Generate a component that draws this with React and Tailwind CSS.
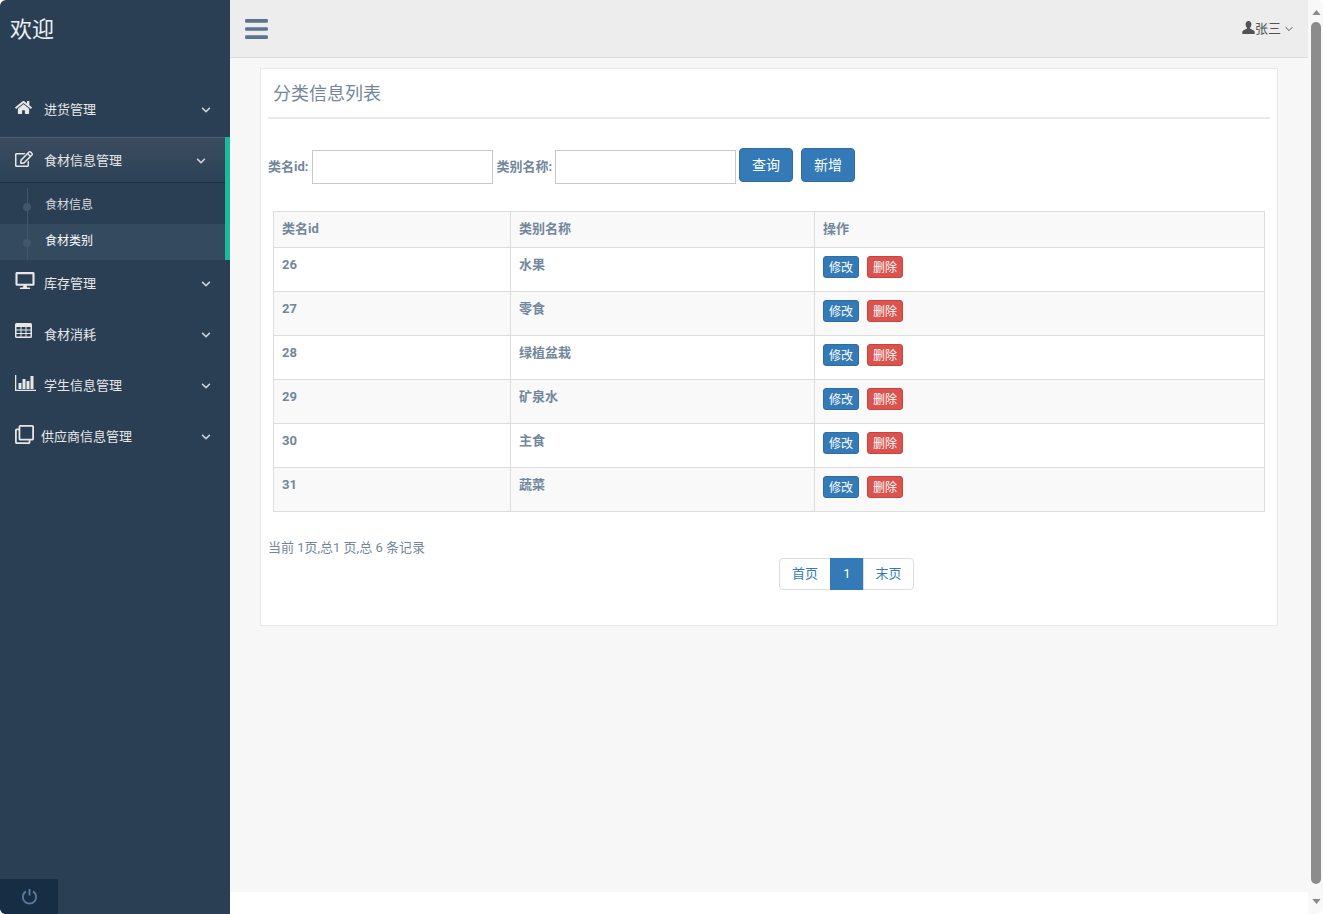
import React from "react";
import { FaHome, FaRegEdit, FaDesktop, FaRegClone, FaBars, FaChevronDown } from "react-icons/fa";

const BarChart = ({ className }) => (
  <svg viewBox="0 0 21 16" className={className} fill="currentColor">
    <path d="M0 0h1.3v14.7H21V16H0z" />
    <rect x="3.5" y="8" width="3" height="6" />
    <rect x="7.5" y="4" width="3" height="10" />
    <rect x="11.5" y="6" width="3" height="8" />
    <rect x="15.5" y="1" width="3" height="13" />
  </svg>
);

const TableIcon = ({ className }) => (
  <svg viewBox="0 0 17 15" className={className} fill="currentColor" fillRule="evenodd">
    <path d="M1.500 0h14A1.500 1.500 0 0 1 17 1.500v12a1.500 1.500 0 0 1-1.500 1.500h-14A1.500 1.500 0 0 1 0 13.500v-12A1.500 1.500 0 0 1 1.500 0zM1.500 4v2.500h4V4zM6.500 4v2.500h4V4zM11.500 4v2.500h4V4zM1.500 7.500V10h4V7.500zM6.500 7.500V10h4V7.500zM11.500 7.500V10h4V7.500zM1.500 11v2.500h4V11zM6.500 11v2.500h4V11zM11.500 11v2.500h4V11z" />
  </svg>
);

const UserIcon = ({ className }) => (
  <svg viewBox="0 0 13 13" className={className} fill="currentColor">
    <path d="M6.500 0C4.700 0 3.600 1.300 3.600 3.200c0 1.400.5 2.600 1.300 3.400v1.100C3 8.500.8 9.300.3 10.800V13h12.400v-2.200C12.200 9.300 10 8.500 8.100 7.700V6.600c.8-.8 1.300-2 1.300-3.400C9.400 1.300 8.300 0 6.500 0z" />
  </svg>
);

const ThinChevron = ({ className }) => (
  <svg viewBox="0 0 9 6" className={className} fill="none" stroke="currentColor" strokeWidth="1.1">
    <path d="M.7 1l3.800 3.800L8.300 1" />
  </svg>
);

const Power = () => (
  <svg viewBox="0 0 18 18" className="w-[17px] h-[17px]" fill="none" stroke="#5a7a9a" strokeWidth="2">
    <path d="M5.200 3.600a7 7 0 1 0 7.600 0" />
    <path d="M9 1v7" />
  </svg>
);

function MenuItem({ icon, iconTop, label, textX }) {
  return (
    <div className="relative flex items-center h-[46px] mb-[5px] pt-[2px] text-[#e7e7e7] text-[13px]">
      <span className={`absolute left-[15px] ${iconTop} text-[#e7e7e7]`}>{icon}</span>
      <span className={textX}>{label}</span>
      <FaChevronDown className="ml-auto mr-[19px] w-[10px] h-[10px] text-[#c8ced4]" />
    </div>
  );
}

function Sidebar() {
  return (
    <aside className="w-[230px] shrink-0 bg-[#2a3f54] flex flex-col h-full rounded-tl-[6px] rounded-bl-[6px] overflow-hidden">
      <div className="h-[86px] pl-[10px] pt-[13px] text-[22px] leading-[34px] text-[#ecf0f1]">欢迎</div>
      <MenuItem icon={<FaHome className="w-[17px] h-[15px]" />} iconTop="top-[14px]" label="进货管理" textX="ml-[44px]" />
      <div className="border-r-[5px] border-[#1abb9c]">
        <div className="relative flex items-center h-[46px] pt-[2px] text-[#e7e7e7] text-[13px] bg-gradient-to-b from-[#3a4c5f] to-[#2d4257] border-t border-[#4e5f70] border-b border-b-[#1f3043]">
          <span className="absolute left-[15px] top-[13px]"><FaRegEdit className="w-[18px] h-[16px]" /></span>
          <span className="ml-[44px]">食材信息管理</span>
          <FaChevronDown className="ml-auto mr-[19px] w-[10px] h-[10px] text-[#c8ced4]" />
        </div>
        <div className="relative pt-[3px] pb-[1px] text-[12px]">
          <div className="absolute left-[27px] top-[5px] bottom-0 w-px bg-[#425668]" />
          <div className="relative h-[36px] flex items-center pl-[45px] pt-[2px] text-[#d5dade] mb-[2px]">
            <span className="absolute left-[23px] top-[17px] w-[8px] h-[8px] rounded-full bg-[#425668]" />
            <span>食材信息</span>
          </div>
          <div className="relative h-[36px] flex items-center pl-[45px] pb-[2px] text-white bg-[#344a5f] -mb-px">
            <span className="absolute left-[27px] top-0 bottom-0 w-px bg-[#425668]" />
            <span className="absolute left-[23px] top-[15px] w-[8px] h-[8px] rounded-full bg-[#425668]" />
            <span>食材类别</span>
          </div>
        </div>
      </div>
      <MenuItem icon={<FaDesktop className="w-[20px] h-[17px]" />} iconTop="top-[12px]" label="库存管理" textX="ml-[44px]" />
      <MenuItem icon={<TableIcon className="w-[17px] h-[15px]" />} iconTop="top-[12px]" label="食材消耗" textX="ml-[44px]" />
      <MenuItem icon={<BarChart className="w-[21px] h-[16px]" />} iconTop="top-[13px]" label="学生信息管理" textX="ml-[44px]" />
      <MenuItem icon={<FaRegClone className="w-[19px] h-[19px]" />} iconTop="top-[12px]" label="供应商信息管理" textX="ml-[41px]" />
      <div className="mt-auto w-[58px] h-[35px] bg-[#172d44] flex items-center justify-center">
        <Power />
      </div>
    </aside>
  );
}

function TopNav() {
  return (
    <header className="h-[58px] shrink-0 bg-[#ededed] border-b border-[#d9dee4] flex items-center pl-[15px] pr-[15px]">
      <FaBars className="w-[23px] h-[26px] text-[#5a738e]" />
      <div className="ml-auto flex items-center text-[13px] text-[#515356]">
        <UserIcon className="w-[13px] h-[13px] -mt-[2px] text-[#515356]" />
        <span className="pt-[1px]">张三</span>
        <ThinChevron className="ml-[4px] w-[8px] h-[6px] text-[#515356]" />
      </div>
    </header>
  );
}

const rows = [
  ["26", "水果"],
  ["27", "零食"],
  ["28", "绿植盆栽"],
  ["29", "矿泉水"],
  ["30", "主食"],
  ["31", "蔬菜"],
];

function Table() {
  return (
    <table className="ml-[5px] w-[992px] table-fixed border-collapse text-[13px] font-bold text-[#73879c]">
      <thead>
        <tr className="bg-[#f9f9f9] h-[36px]">
          <th className="w-[237px] border border-[#dddddd] px-[8px] pb-[2px] text-left font-bold">类名id</th>
          <th className="w-[304px] border border-[#dddddd] px-[8px] pb-[2px] text-left font-bold">类别名称</th>
          <th className="border border-[#dddddd] px-[8px] pb-[2px] text-left font-bold">操作</th>
        </tr>
      </thead>
      <tbody>
        {rows.map((r, i) => (
          <tr key={r[0]} className={`h-[44px] ${i % 2 === 1 ? "bg-[#f9f9f9]" : "bg-white"}`}>
            <td className="border border-[#dddddd] px-[8px] pt-[8px] pb-0 align-top leading-[18px]">{r[0]}</td>
            <td className="border border-[#dddddd] px-[8px] pt-[8px] pb-0 align-top leading-[18px]">{r[1]}</td>
            <td className="border border-[#dddddd] px-[8px] align-top pt-[8px]">
              <div className="flex gap-[8px]">
                <button className="w-[36px] h-[22px] pt-[2px] rounded-[3px] bg-[#337ab7] border border-[#2e6da4] text-white text-[12px] font-normal leading-[18px]">修改</button>
                <button className="w-[36px] h-[22px] pt-[2px] rounded-[3px] bg-[#d9534f] border border-[#d43f3a] text-white text-[12px] font-normal leading-[18px]">删除</button>
              </div>
            </td>
          </tr>
        ))}
      </tbody>
    </table>
  );
}

function Card() {
  return (
    <section className="h-[558px] bg-white border border-[#e6e9ed] px-[7px] pt-[10px]">
      <h2 className="ml-[5px] text-[18px] leading-[29px] font-normal text-[#73879c]">分类信息列表</h2>
      <div className="mt-[9px] h-[2px] bg-[#e6e9ed]" />
      <form className="mt-[29px] flex items-start h-[36px] text-[13px] font-bold text-[#73879c]">
        <label className="mr-[4px] mt-[9px] leading-[19px]">类名id:</label>
        <input className="w-[181px] h-[34px] mt-[2px] border border-[#c9c9c9] bg-white" />
        <label className="ml-[3px] mr-[3px] mt-[9px] leading-[19px]">类别名称:</label>
        <input className="w-[181px] h-[34px] mt-[2px] border border-[#c9c9c9] bg-white" />
        <button type="button" className="ml-[3px] w-[54px] h-[34px] pt-[1px] rounded-[4px] bg-[#337ab7] border border-[#2e6da4] text-white text-[14px] font-normal">查询</button>
        <button type="button" className="ml-[8px] w-[54px] h-[34px] pt-[1px] rounded-[4px] bg-[#337ab7] border border-[#2e6da4] text-white text-[14px] font-normal">新增</button>
      </form>
      <div className="mt-[27px]"><Table /></div>
      <p className="mt-[26px] text-[13px] leading-[19px] text-[#73879c]">当前 1页,总1 页,总 6 条记录</p>
      <nav className="mt-[1px] ml-[511px] flex h-[32px] w-[135px] text-[13px]">
        <a className="w-[52px] flex items-center justify-center border border-[#dddddd] rounded-l-[4px] text-[#337ab7] bg-white">首页</a>
        <a className="w-[34px] -ml-px flex items-center justify-center border border-[#337ab7] bg-[#337ab7] text-white">1</a>
        <a className="w-[51px] -ml-px flex items-center justify-center border border-[#dddddd] rounded-r-[4px] text-[#337ab7] bg-white">末页</a>
      </nav>
    </section>
  );
}

function Scrollbar() {
  return (
    <div className="w-[15px] shrink-0 h-full bg-[#f8f8f8] flex flex-col items-center rounded-tr-[6px] rounded-br-[6px]">
      <svg viewBox="0 0 10 6" className="w-[9px] h-[5px] mt-[10px] ml-px" fill="#8a8a8a"><path d="M5 0l5 6H0z" /></svg>
      <div className="w-[10px] ml-px mt-[7px] h-[862px] rounded-[5px] bg-[#8c8c8c]" />
      <svg viewBox="0 0 10 6" className="w-[9px] h-[5px] mt-[15px] ml-px" fill="#8a8a8a"><path d="M5 6L0 0h10z" /></svg>
    </div>
  );
}

export default function App() {
  return (
    <div className="flex h-[914px] w-[1323px] overflow-hidden bg-white font-['Roboto','Noto_Sans_CJK_SC',sans-serif]">
      <Sidebar />
      <main className="flex-1 min-w-0 flex flex-col">
        <TopNav />
        <div className="h-[834px] bg-[#f7f7f7] px-[30px] pt-[10px]">
          <Card />
        </div>
      </main>
      <Scrollbar />
    </div>
  );
}
